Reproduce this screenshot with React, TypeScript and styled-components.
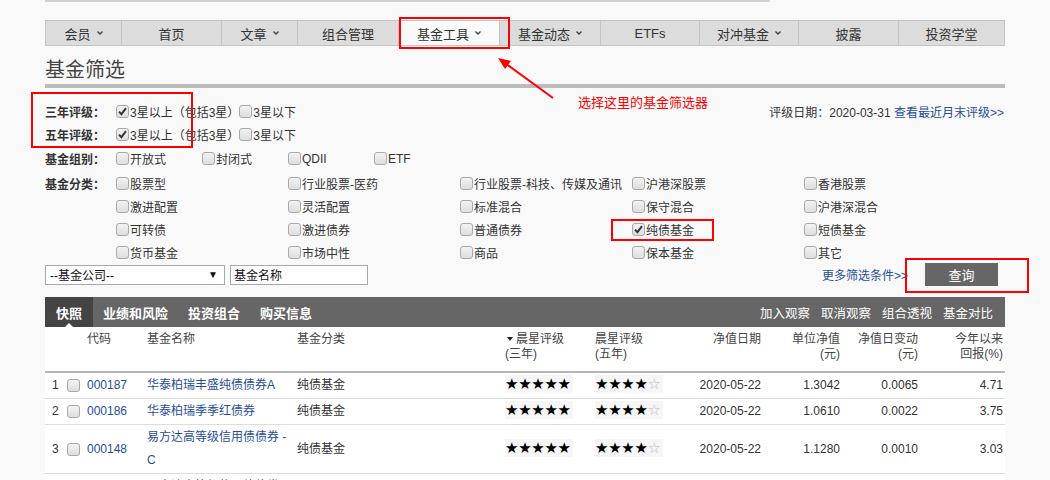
import React from "react";
import styled, { createGlobalStyle } from "styled-components";

const GlobalStyle = createGlobalStyle`
  html, body {
    margin: 0;
    padding: 0;
    background: #f9f9f9;
    overflow: hidden;
  }
  body {
    font-family: "Liberation Sans", "Noto Sans CJK SC", sans-serif;
    font-size: 12px;
    color: #333;
  }
`;

const Wrapper = styled.div`
  position: relative;
  height: 480px;
  padding-left: 45px;
  overflow: hidden;
`;

const Page = styled.div`
  width: 960px;
`;

const TopStrip = styled.div`
  width: 725px;
  height: 2px;
  background: #d2d2d2;
`;

const NavBar = styled.div`
  display: flex;
  margin-top: 18px;
  background: #dcdcdc;
  border: 1px solid #c4c4c4;
  border-right: none;
`;

const NavItem = styled.div<{ $w: number; $active?: boolean }>`
  width: ${(p) => p.$w}px;
  height: 24px;
  display: flex;
  align-items: center;
  justify-content: center;
  gap: 6px;
  font-size: 13px;
  color: #333;
  border-right: 1px solid #c4c4c4;
  background: ${(p) => (p.$active ? "#fafafa" : "transparent")};
  box-sizing: content-box;
`;

const Chevron = () => (
  <svg width="6" height="4" viewBox="0 0 6 4">
    <path d="M0.5 0.5 L3 3 L5.5 0.5" stroke="#444" strokeWidth="1.4" fill="none" />
  </svg>
);

const Title = styled.h1`
  margin: 0;
  padding: 13px 0 3px;
  font-size: 20px;
  line-height: 22px;
  font-weight: normal;
  color: #444;
`;

const TitleBar = styled.div`
  height: 4px;
  background: #bbb;
`;

const Filters = styled.div`
  padding-top: 12px;
`;

const FilterRow = styled.div<{ $mt?: number }>`
  display: flex;
  align-items: center;
  height: 23px;
  margin-top: ${(p) => p.$mt ?? 0}px;
`;

const Label = styled.div`
  width: 71px;
  flex-shrink: 0;
  font-weight: bold;
  color: #333;
`;

const Spacer = styled.div`
  width: 71px;
  flex-shrink: 0;
`;

const Option = styled.label<{ $w?: number }>`
  display: inline-flex;
  align-items: center;
  gap: 1px;
  width: ${(p) => (p.$w ? `${p.$w}px` : "auto")};
  flex-shrink: 0;
  white-space: nowrap;
  color: #333;
`;

const Box = styled.span`
  display: inline-flex;
  align-items: center;
  justify-content: center;
  width: 11px;
  height: 11px;
  border: 1px solid #a9a9a9;
  border-radius: 3px;
  background: linear-gradient(#f2f2f2, #dedede);
  flex-shrink: 0;
`;

const Check = ({ on }: { on?: boolean }) => (
  <Box>
    {on && (
      <svg width="9" height="9" viewBox="0 0 9 9">
        <path d="M1 4.6 L3.4 7.2 L8 1.2" stroke="#333" strokeWidth="1.9" fill="none" />
      </svg>
    )}
  </Box>
);

const RatingDate = styled.div`
  margin-left: auto;
  padding-right: 1px;
  color: #333;
`;

const Link = styled.a`
  color: #1f4e9c;
  text-decoration: none;
`;

const SearchRow = styled.div`
  display: flex;
  align-items: center;
  margin-top: -1px;
  height: 23px;
`;

const SelectBox = styled.div`
  height: 18px;
  border: 1px solid #a9a9a9;
  background: #fff;
  display: flex;
  align-items: center;
  justify-content: space-between;
  padding: 0 6px 0 4px;
  box-sizing: content-box;
  width: 168px;
  color: #111;
`;

const SelectArrow = styled.span`
  font-size: 10px;
`;

const NameInput = styled.div`
  margin-left: 5px;
  width: 130px;
  height: 18px;
  border: 1px solid #a9a9a9;
  background: #fff;
  padding: 0 3px;
  display: flex;
  align-items: center;
  color: #111;
`;

const MoreLink = styled(Link)`
  margin-left: auto;
`;

const QueryButton = styled.button`
  margin-left: 17px;
  margin-right: 7px;
  width: 73px;
  height: 23px;
  border: none;
  background: #666;
  color: #fff;
  font-family: inherit;
  font-size: 13px;
`;

const Panel = styled.div`
  margin-top: 11px;
  background: #fff;
`;

const TabBar = styled.div`
  display: flex;
  align-items: stretch;
  height: 30px;
  background: #666;
`;

const Tab = styled.div<{ $active?: boolean }>`
  position: relative;
  display: flex;
  align-items: center;
  padding: 0 ${(p) => (p.$active ? 11 : 10)}px;
  background: ${(p) => (p.$active ? "#444" : "transparent")};
  color: #fff;
  font-weight: bold;
  font-size: 13px;

  &::after {
    content: "";
    display: ${(p) => (p.$active ? "block" : "none")};
    position: absolute;
    left: 50%;
    bottom: 0;
    margin-left: -4px;
    border: 4px solid transparent;
    border-bottom-color: #fff;
    border-top: none;
  }
`;

const Actions = styled.div`
  margin-left: auto;
  display: flex;
  align-items: center;
  gap: 11px;
  padding-right: 12px;
  color: #fff;
  font-size: 12.5px;
`;

const Table = styled.table`
  width: 960px;
  table-layout: fixed;
  border-collapse: collapse;
`;

const Th = styled.th<{ $right?: boolean; $pr?: number }>`
  height: 39px;
  padding: 5px ${(p) => p.$pr ?? 0}px 0 0;
  vertical-align: top;
  text-align: ${(p) => (p.$right ? "right" : "left")};
  font-weight: normal;
  line-height: 15px;
  color: #444;
  border-bottom: 2px solid #b5b5b5;
`;

const Td = styled.td<{ $right?: boolean; $pr?: number }>`
  padding: 1px ${(p) => p.$pr ?? 0}px 1px 0;
  line-height: 23px;
  text-align: ${(p) => (p.$right ? "right" : "left")};
  border-bottom: 1px solid #ddd;
  color: #333;
  vertical-align: middle;
`;

const RowIndex = styled.div`
  display: flex;
  align-items: center;
  gap: 8px;
  padding-left: 7px;
`;

const SortArrow = styled.span`
  display: inline-block;
  margin: 0 3px 2px 2px;
  border: 3px solid transparent;
  border-top: 4px solid #222;
  border-bottom: none;
  vertical-align: middle;
`;

const Stars = styled.span`
  display: inline-block;
  font-family: "DejaVu Sans", sans-serif;
  font-size: 15px;
  line-height: 18px;
  padding: 0 2px 0 0;
  background: #f6f6f6;
  color: #000;
  letter-spacing: -0.3px;
`;

const EmptyStar = styled.span`
  color: #bbb;
`;

const RedBox = styled.div<{ $x: number; $y: number; $w: number; $h: number }>`
  position: absolute;
  left: ${(p) => p.$x}px;
  top: ${(p) => p.$y}px;
  width: ${(p) => p.$w}px;
  height: ${(p) => p.$h}px;
  border: 2px solid #f00;
  box-sizing: border-box;
  pointer-events: none;
`;

const Note = styled.div`
  position: absolute;
  left: 578px;
  top: 92px;
  color: #f00;
  font-size: 13px;
`;

const Arrow = styled.svg`
  position: absolute;
  left: 490px;
  top: 52px;
`;

const navItems = [
  { t: "会员", w: 75, c: true },
  { t: "首页", w: 99 },
  { t: "文章", w: 75, c: true },
  { t: "组合管理", w: 100 },
  { t: "基金工具", w: 100, c: true, a: true },
  { t: "基金动态", w: 100, c: true },
  { t: "ETFs", w: 98 },
  { t: "对冲基金", w: 98, c: true },
  { t: "披露", w: 99 },
  { t: "投资学堂", w: 105 },
];

const groups = ["开放式", "封闭式", "QDII", "ETF"];

const categories = [
  ["股票型", "行业股票-医药", "行业股票-科技、传媒及通讯", "沪港深股票", "香港股票"],
  ["激进配置", "灵活配置", "标准混合", "保守混合", "沪港深混合"],
  ["可转债", "激进债券", "普通债券", "纯债基金", "短债基金"],
  ["货币基金", "市场中性", "商品", "保本基金", "其它"],
];

const funds = [
  { code: "000187", name: "华泰柏瑞丰盛纯债债券A", nav: "1.3042", chg: "0.0065", ytd: "4.71" },
  { code: "000186", name: "华泰柏瑞季季红债券", nav: "1.0610", chg: "0.0022", ytd: "3.75" },
  { code: "000148", name: "易方达高等级信用债债券 -C", nav: "1.1280", chg: "0.0010", ytd: "3.03" },
  { code: "000147", name: "易方达高等级信用债债券 -A", nav: "1.1320", chg: "0.0010", ytd: "3.10" },
];

const App: React.FC = () => {
  return (
    <Wrapper>
      <GlobalStyle />
      <Page>
        <TopStrip />
        <NavBar>
          {navItems.map((n) => (
            <NavItem key={n.t} $w={n.w} $active={n.a}>
              <span>{n.t}</span>
              {n.c && <Chevron />}
            </NavItem>
          ))}
        </NavBar>

        <Title>基金筛选</Title>
        <TitleBar />

        <Filters>
          <FilterRow>
            <Label>三年评级：</Label>
            <Option>
              <Check on />
              3星以上（包括3星）
            </Option>
            <Option>
              <Check />
              3星以下
            </Option>
            <RatingDate>
              评级日期：2020-03-31 <Link>查看最近月末评级&gt;&gt;</Link>
            </RatingDate>
          </FilterRow>
          <FilterRow>
            <Label>五年评级：</Label>
            <Option>
              <Check on />
              3星以上（包括3星）
            </Option>
            <Option>
              <Check />
              3星以下
            </Option>
          </FilterRow>
          <FilterRow $mt={1}>
            <Label>基金组别：</Label>
            {groups.map((g) => (
              <Option key={g} $w={86}>
                <Check />
                {g}
              </Option>
            ))}
          </FilterRow>
          {categories.map((row, i) => (
            <FilterRow key={i} $mt={i === 0 ? 2 : 0}>
              {i === 0 ? <Label>基金分类：</Label> : <Spacer />}
              {row.map((c) => (
                <Option key={c} $w={172}>
                  <Check on={c === "纯债基金"} />
                  {c}
                </Option>
              ))}
            </FilterRow>
          ))}
          <SearchRow>
            <SelectBox>
              <span>--基金公司--</span>
              <SelectArrow>▼</SelectArrow>
            </SelectBox>
            <NameInput>基金名称</NameInput>
            <MoreLink>更多筛选条件&gt;&gt;</MoreLink>
            <QueryButton>查询</QueryButton>
          </SearchRow>
        </Filters>

        <Panel>
          <TabBar>
            <Tab $active>快照</Tab>
            <Tab>业绩和风险</Tab>
            <Tab>投资组合</Tab>
            <Tab>购买信息</Tab>
            <Actions>
              <span>加入观察</span>
              <span>取消观察</span>
              <span>组合透视</span>
              <span>基金对比</span>
            </Actions>
          </TabBar>
          <Table>
            <colgroup>
              <col style={{ width: 42 }} />
              <col style={{ width: 60 }} />
              <col style={{ width: 150 }} />
              <col style={{ width: 208 }} />
              <col style={{ width: 90 }} />
              <col style={{ width: 85 }} />
              <col style={{ width: 81 }} />
              <col style={{ width: 79 }} />
              <col style={{ width: 78 }} />
              <col style={{ width: 87 }} />
            </colgroup>
            <thead>
              <tr>
                <Th />
                <Th>代码</Th>
                <Th>基金名称</Th>
                <Th>基金分类</Th>
                <Th>
                  <SortArrow />
                  晨星评级
                  <br />
                  (三年)
                </Th>
                <Th>
                  晨星评级
                  <br />
                  (五年)
                </Th>
                <Th $right>净值日期</Th>
                <Th $right>
                  单位净值
                  <br />
                  (元)
                </Th>
                <Th $right>
                  净值日变动
                  <br />
                  (元)
                </Th>
                <Th $right $pr={2}>
                  今年以来
                  <br />
                  回报(%)
                </Th>
              </tr>
            </thead>
            <tbody>
              {funds.map((f, i) => (
                <tr key={f.code}>
                  <Td>
                    <RowIndex>
                      <span>{i + 1}</span>
                      <Check />
                    </RowIndex>
                  </Td>
                  <Td>
                    <Link>{f.code}</Link>
                  </Td>
                  <Td $pr={6}>
                    <Link>{f.name}</Link>
                  </Td>
                  <Td>纯债基金</Td>
                  <Td>
                    <Stars>★★★★★</Stars>
                  </Td>
                  <Td>
                    <Stars>
                      ★★★★<EmptyStar>☆</EmptyStar>
                    </Stars>
                  </Td>
                  <Td $right>2020-05-22</Td>
                  <Td $right>{f.nav}</Td>
                  <Td $right>{f.chg}</Td>
                  <Td $right $pr={2}>
                    {f.ytd}
                  </Td>
                </tr>
              ))}
            </tbody>
          </Table>
        </Panel>
      </Page>

      <RedBox $x={399} $y={17} $w={111} $h={32} />
      <RedBox $x={31} $y={92} $w={162} $h={56} />
      <RedBox $x={611} $y={219} $w={103} $h={22} />
      <RedBox $x={905} $y={258} $w={124} $h={35} />
      <Arrow width="70" height="52" viewBox="0 0 70 52">
        <line x1="63" y1="46" x2="12" y2="9" stroke="#f00" strokeWidth="2" />
        <path d="M8 6 L21 9 L15 17 Z" fill="#f00" />
      </Arrow>
      <Note>选择这里的基金筛选器</Note>
    </Wrapper>
  );
};

export default App;
